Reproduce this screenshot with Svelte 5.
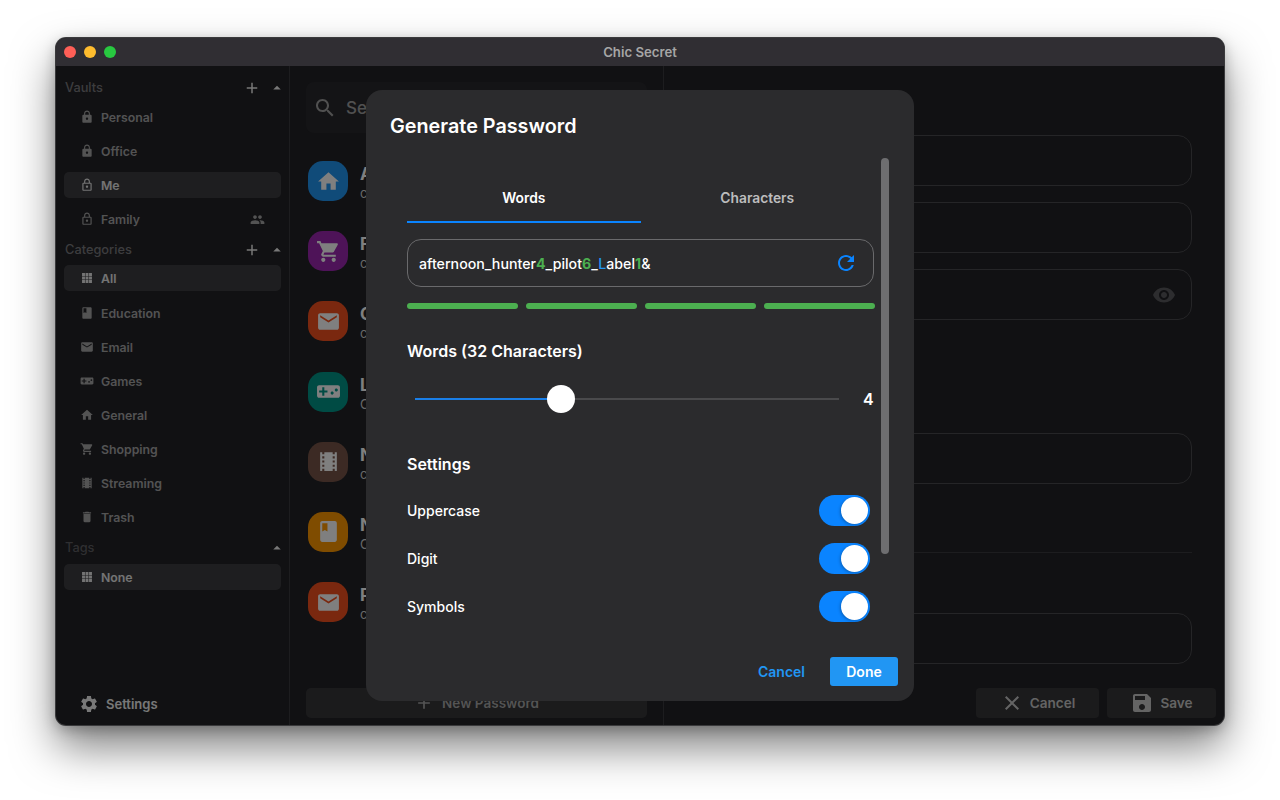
<script lang="ts">
  const icons: Record<string, string> = {
    lock: 'M18 8h-1V6c0-2.76-2.24-5-5-5S7 3.24 7 6v2H6c-1.1 0-2 .9-2 2v10c0 1.1.9 2 2 2h12c1.1 0 2-.9 2-2V10c0-1.1-.9-2-2-2zm-6 9c-1.1 0-2-.9-2-2s.9-2 2-2 2 .9 2 2-.9 2-2 2zm3.1-9H8.9V6c0-1.71 1.39-3.1 3.1-3.1 1.71 0 3.1 1.39 3.1 3.1v2z',
    lockOpen: 'M18 8h-1V6c0-2.76-2.24-5-5-5S7 3.24 7 6v2H6c-1.1 0-2 .9-2 2v10c0 1.1.9 2 2 2h12c1.1 0 2-.9 2-2V10c0-1.1-.9-2-2-2zM9 6c0-1.66 1.34-3 3-3s3 1.34 3 3v2H9V6zm9 14H6V10h12v10zm-6-3c1.1 0 2-.9 2-2s-.9-2-2-2-2 .9-2 2 .9 2 2 2z',
    add: 'M19 13h-6v6h-2v-6H5v-2h6V5h2v6h6v2z',
    up: 'M7 14l5-5 5 5z',
    people: 'M16 11c1.66 0 2.99-1.34 2.99-3S17.66 5 16 5c-1.66 0-3 1.34-3 3s1.34 3 3 3zm-8 0c1.66 0 2.99-1.34 2.99-3S9.66 5 8 5C6.34 5 5 6.34 5 8s1.34 3 3 3zm0 2c-2.33 0-7 1.17-7 3.5V19h14v-2.5c0-2.33-4.67-3.5-7-3.5zm8 0c-.29 0-.62.02-.97.05 1.16.84 1.97 1.97 1.97 3.45V19h6v-2.5c0-2.33-4.67-3.5-7-3.5z',
    grid: 'M3.5 3.5h5v5h-5zM9.5 3.5h5v5h-5zM15.5 3.5h5v5h-5zM3.5 9.5h5v5h-5zM9.5 9.5h5v5h-5zM15.5 9.5h5v5h-5zM3.5 15.5h5v5h-5zM9.5 15.5h5v5h-5zM15.5 15.5h5v5h-5z',
    book: 'M18 2H6c-1.1 0-2 .9-2 2v16c0 1.1.9 2 2 2h12c1.1 0 2-.9 2-2V4c0-1.1-.9-2-2-2zM6 4h5v8l-2.5-1.5L6 12V4z',
    email: 'M20 4H4c-1.1 0-1.99.9-1.99 2L2 18c0 1.1.9 2 2 2h16c1.1 0 2-.9 2-2V6c0-1.1-.9-2-2-2zm0 4l-8 5-8-5V6l8 5 8-5v2z',
    games: 'M21 6H3c-1.1 0-2 .9-2 2v8c0 1.1.9 2 2 2h18c1.1 0 2-.9 2-2V8c0-1.1-.9-2-2-2zm-10 7H8v3H6v-3H3v-2h3V8h2v3h3v2zm4.5 2c-.83 0-1.5-.67-1.5-1.5s.67-1.5 1.5-1.5 1.5.67 1.5 1.5-.67 1.5-1.5 1.5zm4-3c-.83 0-1.5-.67-1.5-1.5S18.67 9 19.5 9s1.5.67 1.5 1.5-.67 1.5-1.5 1.5z',
    home: 'M10 20v-6h4v6h5v-8h3L12 3 2 12h3v8z',
    cart: 'M7 18c-1.1 0-1.99.9-1.99 2S5.9 22 7 22s2-.9 2-2-.9-2-2-2zM1 2v2h2l3.6 7.59-1.35 2.45c-.16.28-.25.61-.25.96 0 1.1.9 2 2 2h12v-2H7.42c-.14 0-.25-.11-.25-.25l.03-.12.9-1.63h7.45c.75 0 1.41-.41 1.75-1.03l3.58-6.49c.08-.14.12-.31.12-.48 0-.55-.45-1-1-1H5.21l-.94-2H1zm16 16c-1.1 0-1.99.9-1.99 2s.89 2 1.99 2 2-.9 2-2-.9-2-2-2z',
    movie: 'M18 3v2h-2V3H8v2H6V3H4v18h2v-2h2v2h8v-2h2v2h2V3h-2zM8 17H6v-2h2v2zm0-4H6v-2h2v2zm0-4H6V7h2v2zm10 8h-2v-2h2v2zm0-4h-2v-2h2v2zm0-4h-2V7h2v2z',
    trash: 'M6 19c0 1.1.9 2 2 2h8c1.1 0 2-.9 2-2V7H6v12zM19 4h-3.5l-1-1h-5l-1 1H5v2h14V4z',
    settings: 'M19.14 12.94c.04-.3.06-.61.06-.94 0-.32-.02-.64-.07-.94l2.03-1.58c.18-.14.23-.41.12-.61l-1.92-3.32c-.12-.22-.37-.29-.59-.22l-2.39.96c-.5-.38-1.03-.7-1.62-.94l-.36-2.54c-.04-.24-.24-.41-.48-.41h-3.84c-.24 0-.43.17-.47.41l-.36 2.54c-.59.24-1.13.57-1.62.94l-2.39-.96c-.22-.08-.47 0-.59.22L2.74 8.87c-.12.21-.08.47.12.61l2.03 1.58c-.05.3-.09.63-.09.94s.02.64.07.94l-2.03 1.58c-.18.14-.23.41-.12.61l1.92 3.32c.12.22.37.29.59.22l2.39-.96c.5.38 1.03.7 1.62.94l.36 2.54c.05.24.24.41.48.41h3.84c.24 0 .44-.17.47-.41l.36-2.54c.59-.24 1.13-.56 1.62-.94l2.39.96c.22.08.47 0 .59-.22l1.92-3.32c.12-.22.07-.47-.12-.61l-2.01-1.58zM12 15.6c-1.98 0-3.6-1.62-3.6-3.6s1.62-3.6 3.6-3.6 3.6 1.62 3.6 3.6-1.62 3.6-3.6 3.6z',
    search: 'M15.5 14h-.79l-.28-.27C15.41 12.59 16 11.11 16 9.5 16 5.91 13.09 3 9.5 3S3 5.91 3 9.5 5.91 16 9.5 16c1.61 0 3.09-.59 4.23-1.57l.27.28v.79l5 4.99L20.49 19l-4.99-5zm-6 0C7.01 14 5 11.99 5 9.5S7.01 5 9.5 5 14 7.01 14 9.5 11.99 14 9.5 14z',
    refresh: 'M17.65 6.35C16.2 4.9 14.21 4 12 4c-4.42 0-7.99 3.58-7.99 8s3.57 8 7.99 8c3.73 0 6.84-2.55 7.73-6h-2.08c-.82 2.33-3.04 4-5.65 4-3.31 0-6-2.69-6-6s2.69-6 6-6c1.66 0 3.14.69 4.22 1.78L13 11h7V4l-2.35 2.35z',
    close: 'M19 6.41L17.59 5 12 10.59 6.41 5 5 6.41 10.59 12 5 17.59 6.41 19 12 13.41 17.59 19 19 17.59 13.41 12z',
    save: 'M17 3H5c-1.11 0-2 .9-2 2v14c0 1.1.89 2 2 2h14c1.1 0 2-.9 2-2V7l-4-4zm-5 16c-1.66 0-3-1.34-3-3s1.34-3 3-3 3 1.34 3 3-1.34 3-3 3zm3-10H5V5h10v4z',
    eye: 'M12 4.5C7 4.5 2.73 7.61 1 12c1.73 4.39 6 7.5 11 7.5s9.27-3.11 11-7.5c-1.73-4.39-6-7.5-11-7.5zM12 17c-2.76 0-5-2.24-5-5s2.24-5 5-5 5 2.24 5 5-2.24 5-5 5zm0-8c-1.66 0-3 1.34-3 3s1.34 3 3 3 3-1.34 3-3-1.34-3-3-3z'
  };

  const vaults = [
    { label: 'Personal', icon: 'lock' },
    { label: 'Office', icon: 'lock' },
    { label: 'Me', icon: 'lockOpen', active: true },
    { label: 'Family', icon: 'lockOpen', shared: true }
  ];

  const categories = [
    { label: 'All', icon: 'grid', active: true },
    { label: 'Education', icon: 'book' },
    { label: 'Email', icon: 'email' },
    { label: 'Games', icon: 'games' },
    { label: 'General', icon: 'home' },
    { label: 'Shopping', icon: 'cart' },
    { label: 'Streaming', icon: 'movie' },
    { label: 'Trash', icon: 'trash' }
  ];

  // only the first letters show, the dialog covers the rest
  const entries = [
    { title: 'A', sub: 'c', icon: 'home', color: '#2196f3' },
    { title: 'F', sub: 'c', icon: 'cart', color: '#9c27b0' },
    { title: 'G', sub: 'c', icon: 'email', color: '#f4511e' },
    { title: 'L', sub: 'C', icon: 'games', color: '#009688' },
    { title: 'N', sub: 'c', icon: 'movie', color: '#795548' },
    { title: 'N', sub: 'C', icon: 'book', color: '#ff9800' },
    { title: 'P', sub: 'c', icon: 'email', color: '#f4511e' }
  ];

  const strength = [0, 1, 2, 3];
  const options = ['Uppercase', 'Digit', 'Symbols'];
  const sliderPercent = 34.4;
</script>

{#snippet icon(name: string, size: number)}
  <svg class="icon" width={size} height={size} viewBox="0 0 24 24" fill="currentColor"><path d={icons[name]} /></svg>
{/snippet}

{#snippet navRow(item: any)}
  <div class="nav-row" class:nav-row--active={item.active}>
    {@render icon(item.icon, 14)}
    <span class="nav-row__label">{item.label}</span>
    {#if item.shared}
      <span class="nav-row__shared">{@render icon('people', 15)}</span>
    {/if}
  </div>
{/snippet}

<div class="desktop">
  <div class="window">
    <header class="titlebar">
      <div class="lights">
        <span class="light light--red"></span>
        <span class="light light--yellow"></span>
        <span class="light light--green"></span>
      </div>
      <span class="titlebar__title">Chic Secret</span>
    </header>

    <div class="content">
      <aside class="sidebar">
        <div class="section-head">
          <span>Vaults</span>
          <span class="section-head__add">{@render icon('add', 18)}</span>
          <span class="section-head__arrow">{@render icon('up', 18)}</span>
        </div>
        {#each vaults as item}
          {@render navRow(item)}
        {/each}

        <div class="section-head section-head--next">
          <span>Categories</span>
          <span class="section-head__add">{@render icon('add', 18)}</span>
          <span class="section-head__arrow">{@render icon('up', 18)}</span>
        </div>
        {#each categories as item}
          {@render navRow(item)}
        {/each}

        <div class="section-head section-head--next section-head--tags">
          <span>Tags</span>
          <span class="section-head__arrow section-head__arrow--solo">{@render icon('up', 18)}</span>
        </div>
        {@render navRow({ label: 'None', icon: 'grid', active: true })}

        <div class="settings">
          {@render icon('settings', 20)}
          <span>Settings</span>
        </div>
      </aside>

      <section class="list">
        <div class="search">
          {@render icon('search', 24)}
          <span>Search</span>
        </div>
        <div class="entries">
          {#each entries as entry}
            <div class="entry">
              <div class="entry__avatar" style="background: {entry.color}">{@render icon(entry.icon, 25)}</div>
              <div class="entry__text">
                <div class="entry__title">{entry.title}</div>
                <div class="entry__sub">{entry.sub}</div>
              </div>
            </div>
          {/each}
        </div>
        <div class="new-password">
          {@render icon('add', 20)}
          <span>New Password</span>
        </div>
      </section>

      <section class="detail">
        <div class="field"></div>
        <div class="field field--gap"></div>
        <div class="field field--gap field--eye">{@render icon('eye', 24)}</div>
        <div class="field field--fourth"></div>
        <div class="detail__divider"></div>
        <div class="field field--fifth"></div>
        <div class="detail__actions">
          <div class="action action--cancel">{@render icon('close', 24)}<span>Cancel</span></div>
          <div class="action action--save">{@render icon('save', 24)}<span>Save</span></div>
        </div>
      </section>

      <div class="scrim"></div>

      <div class="dialog">
        <h2 class="dialog__title">Generate Password</h2>

        <div class="dialog__body">
          <div class="tabs">
            <div class="tab tab--active">Words</div>
            <div class="tab">Characters</div>
          </div>

          <div class="password">
            <span class="password__text">afternoon_hunter<b class="digit">4</b>_pilot<b class="digit">6</b>_<b class="upper">L</b>abel<b class="digit">1</b>&amp;</span>
            <span class="password__refresh">{@render icon('refresh', 24)}</span>
          </div>

          <div class="strength">
            {#each strength as s}
              <span class="strength__bar"></span>
            {/each}
          </div>

          <h3 class="heading heading--words">Words (32 Characters)</h3>
          <div class="slider">
            <div class="slider__track">
              <div class="slider__fill" style="width: {sliderPercent}%"></div>
              <div class="slider__thumb" style="left: {sliderPercent}%"></div>
            </div>
            <span class="slider__value">4</span>
          </div>

          <h3 class="heading heading--settings">Settings</h3>
          {#each options as option}
            <div class="option">
              <span>{option}</span>
              <span class="switch"><span class="switch__thumb"></span></span>
            </div>
          {/each}
        </div>

        <div class="dialog__footer">
          <span class="btn-text">Cancel</span>
          <span class="btn-done">Done</span>
        </div>

        <div class="scrollbar"></div>
      </div>
    </div>
  </div>
</div>

<style>
  :global(body) {
    background: #fff;
    font-family: Inter, "Liberation Sans", sans-serif;
  }

  .desktop {
    width: 1280px;
    height: 800px;
    box-sizing: border-box;
    padding: 38px 56px 0;
    overflow: hidden;
  }

  .window {
    height: 687px;
    border-radius: 10px;
    overflow: hidden;
    display: flex;
    flex-direction: column;
    background: #222226;
    box-shadow: 0 0 0 1px #3a3a3c, 0 22px 44px rgba(0, 0, 0, 0.5), 0 4px 14px rgba(0, 0, 0, 0.25);
  }

  .icon {
    display: block;
    flex-shrink: 0;
  }

  .titlebar {
    height: 28px;
    flex-shrink: 0;
    background: #302e33;
    position: relative;
    display: flex;
    align-items: center;
    justify-content: center;
  }

  .titlebar__title {
    font-size: 13.2px;
    font-weight: 600;
    color: #a6a6a6;
  }

  .lights {
    position: absolute;
    left: 8px;
    top: 8px;
    display: flex;
    gap: 8px;
  }

  .light {
    width: 12px;
    height: 12px;
    border-radius: 50%;
  }

  .light--red { background: #ff5f57; }
  .light--yellow { background: #febc2e; }
  .light--green { background: #28c840; }

  .content {
    flex: 1;
    min-height: 0;
    position: relative;
    display: flex;
  }

  .sidebar {
    width: 234px;
    flex-shrink: 0;
    box-sizing: border-box;
    padding: 13px 8px 0;
    border-right: 1px solid #3a3a3e;
    display: flex;
    flex-direction: column;
    color: #fff;
  }

  .section-head {
    height: 25px;
    flex-shrink: 0;
    box-sizing: border-box;
    display: flex;
    align-items: flex-start;
    padding-left: 1px;
    font-size: 12.8px;
    line-height: 18px;
    font-weight: 500;
    color: #7a7a7e;
  }

  .section-head--next {
    padding-top: 1px;
  }

  .section-head--tags {
    height: 26px;
    color: #5e5e62;
  }

  .section-head__add {
    margin-left: auto;
    color: #f0f0f0;
  }

  .section-head__arrow {
    margin-left: 7px;
    margin-right: -5px;
    color: #f0f0f0;
  }

  .section-head__arrow--solo {
    margin-left: auto;
  }

  .nav-row {
    height: 26px;
    flex-shrink: 0;
    margin-bottom: 8px;
    padding-left: 16px;
    border-radius: 5px;
    display: flex;
    align-items: center;
    gap: 7px;
    font-size: 12.3px;
    font-weight: 600;
    color: #a6a6a6;
  }

  .nav-row--active {
    background: #3d3d41;
    color: #e8e8e8;
  }

  .section-head--next + .nav-row--active {
    margin-bottom: 9px;
  }

  .nav-row__shared {
    margin-left: auto;
    margin-right: 16px;
  }

  .settings {
    margin-top: auto;
    margin-bottom: 11px;
    padding-left: 15px;
    display: flex;
    align-items: center;
    gap: 7px;
    font-size: 13px;
    font-weight: 600;
    color: #f0f0f0;
  }

  .list {
    width: 374px;
    flex-shrink: 0;
    box-sizing: border-box;
    padding: 16px 16px 7px;
    border-right: 1px solid #3a3a3e;
    display: flex;
    flex-direction: column;
    color: #fff;
  }

  .search {
    height: 51px;
    flex-shrink: 0;
    border-radius: 8px;
    background: #29292d;
    display: flex;
    align-items: center;
    gap: 9px;
    padding-left: 7px;
    font-size: 17px;
    font-weight: 500;
    color: #a0a0a0;
  }

  .entries {
    margin-top: 13px;
  }

  .entry {
    height: 70.2px;
    padding-left: 2px;
    display: flex;
    align-items: flex-start;
    gap: 12px;
    padding-top: 15px;
    box-sizing: border-box;
  }

  .entry__avatar {
    width: 40px;
    height: 40px;
    border-radius: 15px;
    display: flex;
    align-items: center;
    justify-content: center;
    color: #fff;
  }

  .entry__text {
    padding-top: 3px;
  }

  .entry__title {
    font-size: 17px;
    font-weight: 700;
    line-height: 21px;
  }

  .entry__sub {
    font-size: 13px;
    line-height: 16px;
    color: #d0d0d0;
  }

  .new-password {
    margin-top: auto;
    height: 30px;
    border-radius: 5px;
    background: #363639;
    display: flex;
    align-items: center;
    justify-content: center;
    gap: 8px;
    font-size: 13.5px;
    font-weight: 600;
    color: #a8a8a8;
  }

  .detail {
    flex: 1;
    min-width: 0;
    padding: 69px 32px 7px 16px;
    display: flex;
    flex-direction: column;
    position: relative;
  }

  .field {
    height: 51px;
    flex-shrink: 0;
    box-sizing: border-box;
    border: 1px solid #4a4a4e;
    border-radius: 14px;
    display: flex;
    align-items: center;
    justify-content: flex-end;
    padding-right: 15px;
    color: #666;
  }

  .field--gap { margin-top: 16px; }
  .field--eye { color: #5a5a5e; }
  .field--fourth { margin-top: 113px; }
  .field--fifth { margin-top: 60px; }

  .detail__divider {
    height: 1px;
    margin-top: 68px;
    background: #3a3a3e;
  }

  .detail__actions {
    margin-top: auto;
    margin-right: -24px;
    display: flex;
    justify-content: flex-end;
    gap: 8px;
  }

  .action {
    height: 30px;
    border-radius: 4px;
    background: #363639;
    display: flex;
    align-items: center;
    justify-content: center;
    gap: 6px;
    font-size: 13.6px;
    font-weight: 600;
    color: #c8c8c8;
  }

  .action--cancel { width: 123px; }
  .action--save { width: 109px; }

  .scrim {
    position: absolute;
    inset: 0;
    background: rgba(0, 0, 0, 0.5);
  }

  .dialog {
    position: absolute;
    left: 310px;
    top: 24px;
    width: 548px;
    height: 611px;
    box-sizing: border-box;
    padding-top: 24px;
    border-radius: 16px;
    background: #2b2b2d;
    color: #fff;
    display: flex;
    flex-direction: column;
  }

  .dialog__title {
    margin: 0 0 0 24px;
    font-size: 19.8px;
    line-height: 24px;
    font-weight: 600;
  }

  .dialog__body {
    padding: 37px 39px 0 41px;
  }

  .tabs {
    display: grid;
    grid-template-columns: 1fr 1fr;
    height: 48px;
    margin-right: 1px;
  }

  .tab {
    box-sizing: border-box;
    display: flex;
    align-items: center;
    justify-content: center;
    font-size: 13.8px;
    font-weight: 600;
    color: #bdbdbd;
    border-bottom: 2px solid transparent;
  }

  .tab--active {
    color: #fff;
    border-bottom-color: #0a84ff;
  }

  .password {
    margin: 16px 1px 0 0;
    height: 48px;
    box-sizing: border-box;
    padding: 0 15px 0 11px;
    border: 1px solid #6a6a6c;
    border-radius: 14px;
    display: flex;
    align-items: center;
    justify-content: space-between;
    font-size: 14.2px;
    font-weight: 500;
  }

  .digit {
    font-weight: 700;
    color: #4caf50;
  }

  .upper {
    font-weight: 500;
    color: #2196f3;
  }

  .password__refresh {
    color: #0a84ff;
  }

  .strength {
    margin-top: 16px;
    display: flex;
    gap: 8px;
  }

  .strength__bar {
    flex: 1;
    height: 6px;
    border-radius: 3px;
    background: #4caf50;
  }

  .heading {
    margin: 0;
    font-size: 16px;
    line-height: 20px;
    font-weight: 600;
  }

  .heading--words { margin-top: 32px; }
  .heading--settings { margin-top: 40px; }

  .slider {
    margin-top: 23px;
    height: 30px;
    display: flex;
    align-items: center;
    padding-left: 8px;
  }

  .slider__track {
    width: 424px;
    height: 2px;
    background: #4a4a4c;
    position: relative;
  }

  .slider__fill {
    height: 100%;
    background: #1a7fe8;
  }

  .slider__thumb {
    position: absolute;
    top: 1px;
    width: 28px;
    height: 28px;
    margin: -14px 0 0 -14px;
    border-radius: 50%;
    background: #fff;
  }

  .slider__value {
    margin-left: 24px;
    font-size: 16px;
    font-weight: 600;
  }

  .option {
    height: 48px;
    padding-right: 5px;
    display: flex;
    align-items: center;
    justify-content: space-between;
    font-size: 14px;
    font-weight: 500;
  }

  .heading--settings + .option {
    margin-top: 12px;
  }

  .switch {
    width: 51px;
    height: 31px;
    box-sizing: border-box;
    padding: 2px;
    border-radius: 16px;
    background: #0a84ff;
    display: flex;
    justify-content: flex-end;
  }

  .switch__thumb {
    width: 27px;
    height: 27px;
    border-radius: 50%;
    background: #fff;
    box-shadow: -1px 1px 3px rgba(0, 0, 0, 0.25);
  }

  .dialog__footer {
    margin-top: 27px;
    padding-right: 16px;
    display: flex;
    align-items: center;
    justify-content: flex-end;
    gap: 25px;
    font-size: 14px;
    font-weight: 600;
  }

  .btn-text {
    color: #2196f3;
  }

  .btn-done {
    width: 68px;
    height: 29px;
    border-radius: 3px;
    background: #2196f3;
    color: #fff;
    display: flex;
    align-items: center;
    justify-content: center;
  }

  .scrollbar {
    position: absolute;
    left: 515px;
    top: 68px;
    width: 8px;
    height: 396px;
    border-radius: 4px;
    background: #6e6e70;
  }
</style>
